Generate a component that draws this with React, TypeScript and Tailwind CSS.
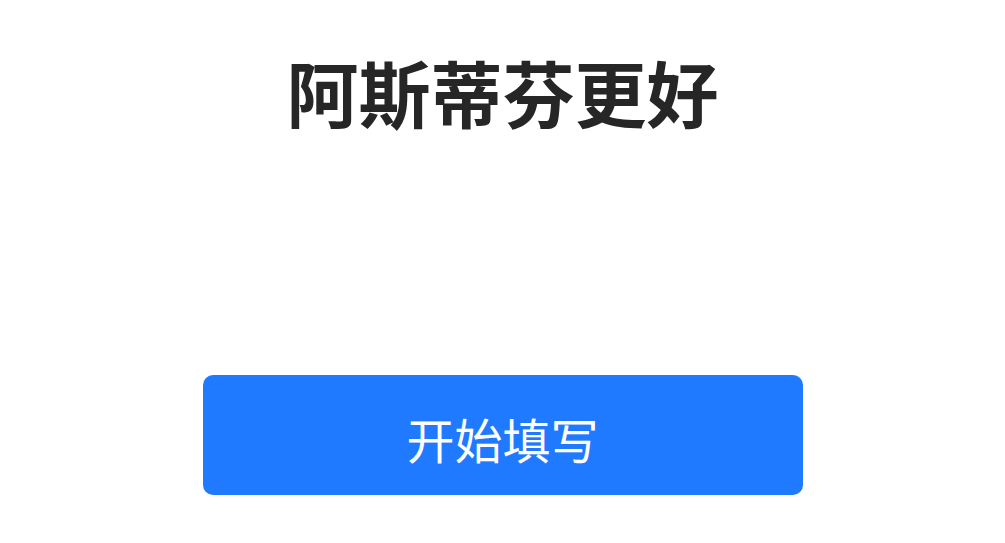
import React from "react";

const App: React.FC = () => {
  return (
    <div
      className="w-full min-h-[543px] bg-white flex flex-col items-center"
      style={{ fontFamily: '"Noto Sans CJK SC", "Noto Sans", sans-serif' }}
    >
      {/* Title */}
      <h1 className="mt-[55px] text-[72px] leading-none font-bold text-[#262626]">
        阿斯蒂芬更好
      </h1>

      {/* Start button */}
      <button className="mt-[248px] w-[600px] h-[120px] pt-[6px] rounded-[10px] bg-[#1f7aff] text-white text-[48px] leading-none">
        开始填写
      </button>
    </div>
  );
};

export default App;
